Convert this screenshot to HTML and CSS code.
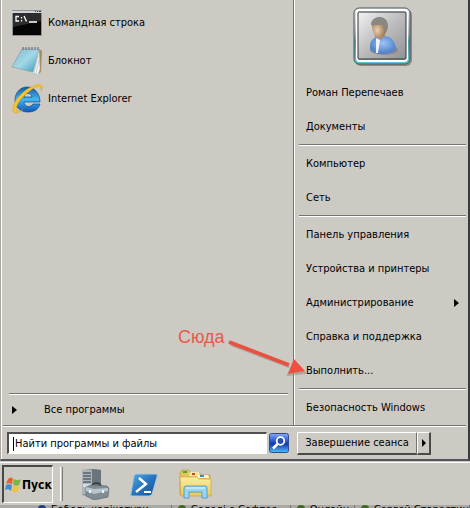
FILE: index.html
```
<!DOCTYPE html>
<html lang="ru">
<head>
  <meta charset="UTF-8" />
  <title>Меню Пуск</title>
  <meta name="viewport" content="width=device-width, initial-scale=1.0" />
  <link rel="stylesheet" href="styles.css">
</head>
<body>

  <div class="menu">
    <div class="panes">
      <div class="programs">
        <a class="program" href="#cmd">
          <svg width="32" height="28" viewBox="0 0 32 28">
            <rect x="1" y="1" width="30" height="26" rx="1" fill="#8d9095" />
            <path d="M1 2h30v2H1z" fill="#cfd3d8" />
            <path d="M24 2h1v1h-1zM26 2h1v1h-1zM28 2h2v1h-2z" fill="#333" />
            <path d="M2 4h28v22H2z" fill="#050505" />
            <path d="M2 4h28v8L2 18z" fill="#2c2c2c" />
            <path d="M8 7.500H5v4.500h3M10.500 8v1.500M10.500 11v1.500M13 7l2.500 5.500M18 13h8" fill="none" stroke="#fff" stroke-width="1.300" />
          </svg>
          <span>Командная строка</span>
        </a>
        <a class="program" href="#notepad">
          <svg width="32" height="30" viewBox="0 0 32 30">
            <defs>
              <linearGradient id="note" x1="0" y1="0" x2="1" y2="1">
                <stop offset="0" stop-color="#79b9d2" />
                <stop offset=".5" stop-color="#a3d8e6" />
                <stop offset="1" stop-color="#3b9abb" />
              </linearGradient>
            </defs>
            <path d="M28 3l3 2-1 21-4 3z" fill="#a98b55" />
            <path d="M12 3l16 0 1 20-2 6-7-3z" fill="#f3f6f7" stroke="#a4b0b5" stroke-width=".5" />
            <path d="M11 3l17 1-6 22L1 21z" fill="url(#note)" stroke="#70909b" stroke-width=".5" />
            <path d="M23 27l4-17M25 28l3-14" stroke="#9fb3bb" stroke-width=".6" />
            <path d="M12 1v3M15 1v3M18 1v3M21 1v3M24 1v3M27 1v3" stroke="#5d6265" />
          </svg>
          <span>Блокнот</span>
        </a>
        <a class="program" href="#ie">
          <svg width="32" height="32" viewBox="0 0 32 32">
            <defs>
              <linearGradient id="globe" x1="0" y1="0" x2="0" y2="1">
                <stop offset="0" stop-color="#155ca5" />
                <stop offset=".5" stop-color="#43b5ef" />
                <stop offset="1" stop-color="#0b58bb" />
              </linearGradient>
            </defs>
            <path d="M29 19H13c0 5 7 6 9 2h7c-2 6-6 8-12 8C9 29 4 24 4 17S9 4 16 4s13 6 13 15zM21 14c-1-5-7-5-8 0z" fill="url(#globe)" stroke="#124a8d" stroke-width=".7" fill-rule="evenodd" />
            <path d="M23 3c7-3 10-1 7 5 1-6-3-6-10-1C10 14 3 24 6 28c1 1 4 0 6-2-6 6-11 5-10-1C3 17 13 6 23 3z" fill="#f8c62c" stroke="#d89818" stroke-width=".5" />
          </svg>
          <span>Internet Explorer</span>
        </a>
        <a class="all-programs" href="#all">
          <svg width="5" height="8" viewBox="0 0 5 8"><path d="M0 0l5 4-5 4z" /></svg>
          <span>Все программы</span>
        </a>
      </div>

      <div class="places">
        <div class="avatar">
          <svg width="60" height="60" viewBox="0 0 60 60">
            <defs>
              <linearGradient id="frame" x1="0" y1="0" x2="0" y2="1">
                <stop offset="0" stop-color="#eef2f3" />
                <stop offset=".45" stop-color="#a9b9bf" />
                <stop offset=".6" stop-color="#4e9eae" />
                <stop offset="1" stop-color="#62c5d5" />
              </linearGradient>
              <linearGradient id="photo" x1="0" y1="0" x2="1" y2="1">
                <stop offset="0" stop-color="#f2f2f4" />
                <stop offset=".5" stop-color="#bcbbbe" />
                <stop offset="1" stop-color="#939196" />
              </linearGradient>
              <radialGradient id="skin" cx=".35" cy=".6">
                <stop offset="0" stop-color="#ead1b0" />
                <stop offset="1" stop-color="#a07d58" />
              </radialGradient>
              <radialGradient id="shirt" cx=".5" cy=".4">
                <stop offset="0" stop-color="#a0c4f5" />
                <stop offset="1" stop-color="#5587cd" />
              </radialGradient>
            </defs>
            <rect x="2" y="2" width="57" height="57" rx="6" fill="#8b8985" />
            <rect x="1" y="1" width="56" height="56" rx="5" fill="url(#frame)" stroke="#4b5659" />
            <rect x="4" y="3" width="50" height="51" rx="3" fill="none" stroke="#fff" stroke-width="2" />
            <rect x="5" y="5" width="48" height="47" rx="1" fill="url(#photo)" stroke="#303236" />
            <ellipse cx="31" cy="43" rx="14" ry="5" fill="#77777c" opacity=".6" />
            <path d="M22 27h10v12H22z" fill="#b08a62" />
            <path d="M17 40c0-6 3-9 7-10l3 3 4-4c7 0 11 5 12 12-3 8-22 8-26 1z" fill="url(#shirt)" />
            <path d="M23 31l4 2-2 13h-2z" fill="#eef5ff" />
            <path d="M19 17c0-7 14-8 15 1 0 7-3 13-8 13-5-1-7-7-7-14z" fill="url(#skin)" />
            <path d="M18 18c0-10 16-11 17 0 0 4-1 7-3 8l-1-7c-4-2-9 0-13-1z" fill="#8b8782" />
          </svg>
        </div>
        <a class="place" href="#user">Роман Перепечаев</a>
        <a class="place" href="#documents">Документы</a>
        <hr>
        <a class="place" href="#computer">Компьютер</a>
        <a class="place" href="#network">Сеть</a>
        <hr>
        <a class="place" href="#control">Панель управления</a>
        <a class="place" href="#devices">Устройства и принтеры</a>
        <a class="place" href="#admin">
          Администрирование
          <svg width="5" height="8" viewBox="0 0 5 8"><path d="M0 0l5 4-5 4z" /></svg>
        </a>
        <a class="place" href="#help">Справка и поддержка</a>
        <a class="place run" href="#run">
          Выполнить...
          <span class="callout">
            <span class="callout-text">Сюда</span>
            <svg width="80" height="38" viewBox="0 0 80 38">
              <path d="M3 5l58 22M77 33l-17 2 6-14z" fill="#8d8984" stroke="#8d8984" stroke-width="2" opacity=".5" />
              <path d="M1 2l60 23" stroke="#e9503f" stroke-width="4" />
              <path d="M77 31l-17 3 6-15z" fill="#f0503f" />
            </svg>
          </span>
        </a>
        <hr>
        <a class="place" href="#security">Безопасность Windows</a>
      </div>
    </div>

    <div class="footer">
      <form class="search">
        <input type="text" value="Найти программы и файлы" aria-label="Найти программы и файлы">
        <button type="button" aria-label="Поиск">
          <svg width="20" height="20" viewBox="0 0 20 20">
            <defs>
              <linearGradient id="find" x1="0" y1="0" x2="0" y2="1">
                <stop offset="0" stop-color="#85aef0" />
                <stop offset=".4" stop-color="#2a55d0" />
                <stop offset=".55" stop-color="#1636ac" />
                <stop offset="1" stop-color="#49c4ff" />
              </linearGradient>
            </defs>
            <rect x=".5" y=".5" width="19" height="19" rx="2" fill="url(#find)" stroke="#304c8e" />
            <circle cx="11.500" cy="8" r="3.800" fill="#284dbb" stroke="#fff" stroke-width="1.800" />
            <path d="M8.500 11L4 15.500" stroke="#fff" stroke-width="2.500" />
          </svg>
        </button>
      </form>
      <div class="session">
        <button class="logoff" type="button">Завершение сеанса</button>
        <button class="more" type="button" aria-label="Ещё">
          <svg width="4" height="8" viewBox="0 0 4 8"><path d="M0 0l4 4-4 4z" /></svg>
        </button>
      </div>
    </div>
  </div>

  <div class="taskbar">
    <button class="start" type="button">
      <svg width="16" height="16" viewBox="0 0 16 16">
        <path d="M3 2c2-2 4-2 5 0L7 7C5 6 3 6 1 7z" fill="#e8602c" />
        <path d="M9 2c2 1 4 2 7 0l-2 6c-2 1-4 1-6-1z" fill="#76b643" />
        <path d="M1 8c2-1 4-1 6 0l-1 6c-2-2-4-2-6-1z" fill="#458ccf" />
        <path d="M8 8c2 1 4 2 6 1l-1 5c-2 2-4 2-6 0z" fill="#f5c33b" />
      </svg>
      Пуск
    </button>
    <span class="grip"></span>
    <div class="pinned">
      <button type="button" aria-label="Диспетчер сервера">
        <svg width="32" height="32" viewBox="0 0 32 32">
          <path d="M4 2l10-1 9 1v24l-9 3-10-2z" fill="#818b91" />
          <path d="M14 1l9 1v24l-9 3z" fill="#6a757b" />
          <path d="M4 2h10v26l-10-2z" fill="#aab4b9" />
          <path d="M5 5h8M5 8h8M5 11h8M5 14h8" stroke="#59646b" stroke-width="1.400" />
          <path d="M5 16h8v3H5z" fill="#d8dee0" />
          <path d="M14 18c1-4 8-4 9 0" fill="none" stroke="#30383c" stroke-width="1.500" />
          <path d="M8 19l5-2 16 1 2 2-1 9-14 3-8-4z" fill="#7f8e96" stroke="#536069" stroke-width=".6" />
          <path d="M8 19l8 2 14-1v3l-14 3-8-3z" fill="#b9c5ca" />
          <path d="M12 22v3M25 22v3" stroke="#f0f3f4" stroke-width="2" />
        </svg>
      </button>
      <button type="button" aria-label="Windows PowerShell">
        <svg width="32" height="32" viewBox="0 0 32 32">
          <defs>
            <linearGradient id="shell" x1="0" y1="0" x2="1" y2="1">
              <stop offset="0" stop-color="#58a9e4" />
              <stop offset=".5" stop-color="#2675bd" />
              <stop offset="1" stop-color="#174c90" />
            </linearGradient>
          </defs>
          <path d="M8 6h20q2 0 1 3l-5 17q-1 2-3 2H4q-2 0-1-3L6 8q1-2 2-2z" fill="url(#shell)" stroke="#9fc8e4" />
          <path d="M11 10l7 6-10 8" fill="none" stroke="#fff" stroke-width="2.400" />
          <path d="M16 24h7" stroke="#fff" stroke-width="2" />
        </svg>
      </button>
      <button type="button" aria-label="Проводник">
        <svg width="34" height="32" viewBox="0 0 34 32">
          <defs>
            <linearGradient id="folder" x1="0" y1="0" x2="0" y2="1">
              <stop offset="0" stop-color="#fbeea0" />
              <stop offset="1" stop-color="#e8c860" />
            </linearGradient>
          </defs>
          <path d="M2 5l2-3h7l1 3h10l1 2h9v20H2z" fill="#e5c45d" stroke="#b5913d" stroke-width=".6" />
          <path d="M5 3h4v2H5z" fill="#45a938" />
          <path d="M12 4h9l1 4H11z" fill="#f8e7a2" />
          <path d="M14 5h3v2h-3z" fill="#cc4228" />
          <path d="M20 7h10l1 3H19z" fill="#fff5c4" />
          <path d="M22 7h4v2h-4z" fill="#4384c1" />
          <path d="M2 9h17l2 2h12v17H3z" fill="url(#folder)" stroke="#c49d3f" stroke-width=".6" />
          <path d="M6 30V20q0-2 2-2h19q2 0 2 2v10h-5v-6H11v6z" fill="#9bd4ee" stroke="#4791b8" stroke-width=".8" />
          <path d="M8 20h19" stroke="#e2f7ff" />
        </svg>
      </button>
    </div>
  </div>

  <div class="below">
    <span class="contact online">Бабель,карікатури</span>
    <span class="contact">Солоді о Софтос</span>
    <span class="contact">Онлайн</span>
    <span class="contact">Сергей Старостин</span>
  </div>

</body>
</html>
```
FILE: styles.css
```
* {
  box-sizing: border-box;
}

body {
  margin: 0;
  height: 100vh;
  display: flex;
  flex-direction: column;
  overflow: hidden;
  background: #cdcac4;
  color: #000;
  font: 11px/14px "DejaVu Sans Condensed", Tahoma, sans-serif;
}

a {
  color: inherit;
  text-decoration: none;
}

button,
input {
  font: inherit;
  color: inherit;
}

button {
  padding: 0;
  border: none;
  background: none;
}

svg {
  display: block;
  flex: none;
}

.menu {
  border-left: 1px solid #aaa7a2;
  border-right: 2px solid #3b3b3d;
  border-bottom: 2px solid #55555a;
  box-shadow: inset 1px 0 #fff;
}

.panes {
  display: flex;
  margin: 0 2px;
  border-bottom: 1px solid #77746f;
}

.programs {
  flex: 1;
  display: flex;
  flex-direction: column;
  padding: 4px 5px 0 6px;
}

.program {
  display: flex;
  align-items: center;
  gap: 5px;
  height: 38px;
  padding-left: 2px;
}

.all-programs {
  display: flex;
  align-items: center;
  gap: 27px;
  height: 32px;
  margin-top: auto;
  padding-left: 3px;
  border-top: 1px solid #77746f;
  box-shadow: inset 0 1px #fff;
}

.places {
  width: 173px;
  padding: 7px 0 0 5px;
  border-left: 1px solid #77746f;
  box-shadow: inset 1px 0 #fff;
}

.avatar {
  display: flex;
  justify-content: center;
  height: 69px;
}

.place {
  display: flex;
  align-items: center;
  justify-content: space-between;
  height: 34px;
  padding: 0 7px;
}

hr {
  height: 2px;
  margin: 0 0 1px;
  border: none;
  border-top: 1px solid #77746f;
  background: #fff;
}

.run {
  position: relative;
}

.callout {
  position: absolute;
  right: 160px;
  bottom: 10px;
  width: 128px;
  color: #e9594b;
  font: 18px/22px "Liberation Sans", Arial, sans-serif;
}

.callout-text {
  display: block;
}

.callout svg {
  margin: -8px 0 0 50px;
}

.footer {
  display: flex;
  margin: 0 2px;
  height: 33px;
  align-items: center;
  border-top: 1px solid #fff;
}

.search {
  flex: 1;
  display: flex;
  align-items: center;
  gap: 2px;
  padding-left: 4px;
}

.search input {
  flex: 1;
  min-width: 0;
  height: 22px;
  padding: 0 6px;
  border: 1px solid #fff;
  border-top: 2px solid #505050;
  border-left: 2px solid #505050;
  background: linear-gradient(#000, #000) 4px center / 1px 14px no-repeat #fff;
}

.session {
  display: flex;
  width: 177px;
  padding-left: 8px;
}

.session button {
  display: flex;
  align-items: center;
  justify-content: center;
  height: 23px;
  border: 1px solid #fff;
  border-right-color: #77746f;
  border-bottom: 2px solid #4a4a4a;
}

.session .logoff {
  width: 120px;
}

.session .more {
  width: 14px;
  border-right: 2px solid #4a4a4a;
}

.taskbar {
  flex: 1;
  display: flex;
  align-items: center;
  margin-top: 1px;
  padding: 0 2px;
  border-top: 1px solid #fff;
}

.start {
  display: flex;
  align-items: center;
  gap: 1px;
  width: 51px;
  height: 38px;
  padding-left: 1px;
  border: 1px solid #fff;
  border-top: 2px solid #484848;
  border-left: 2px solid #484848;
  font-size: 12px;
  font-weight: bold;
}

.grip {
  width: 3px;
  height: 34px;
  margin-left: 7px;
  border-left: 1px solid #fff;
  border-right: 1px solid #807d78;
}

.pinned {
  display: flex;
  gap: 18px;
  margin-left: 15px;
}

/* edge of the window behind the taskbar */
.below {
  display: grid;
  grid-template-columns: 140fr 119fr 64fr 115fr;
  height: 3px;
  padding-left: 32px;
  overflow: hidden;
  background: #aaa8a4;
  white-space: nowrap;
  line-height: 4px;
}

.contact {
  padding-left: 6px;
  border-right: 1px solid #77746f;
}

.contact::before {
  content: "";
  display: inline-block;
  width: 8px;
  height: 8px;
  margin-right: 5px;
  border-radius: 4px;
  background: #3c6b1c;
}

.contact.online::before {
  background: #1d3f86;
}
```
